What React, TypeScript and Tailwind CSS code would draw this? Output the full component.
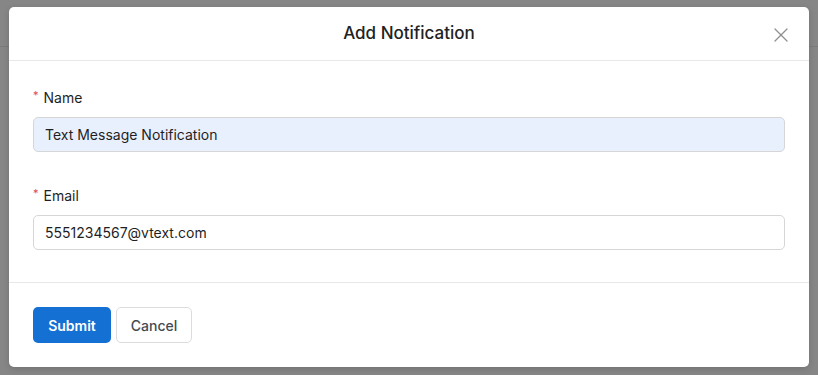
import { X } from "lucide-react";

const Field = ({
   label,
   value,
   autofilled,
}: {
   label: string;
   value: string;
   autofilled?: boolean;
}) => {
   return (
      <div className="flex flex-col">
         <label className="flex items-center h-5 text-[14px] text-[#1f1f1f]">
            <span className="text-[#e5484d] text-[11px] mr-[5px] -mt-[4px]">*</span>
            {label}
         </label>
         <input
            readOnly
            value={value}
            className={`mt-[10px] h-[35px] w-full rounded-[5px] border border-[#d6d6d6] px-[11px] text-[14px] text-[#1f1f1f] outline-none ${
               autofilled ? "bg-[#e8f0fe]" : "bg-white"
            }`}
         />
      </div>
   );
};

export default function App() {
   return (
      <div
         className="relative h-[375px] w-[818px] overflow-hidden bg-[#868686] px-[9px] pt-[7px]"
         style={{ fontFamily: "Inter, 'Noto Sans', sans-serif" }}
      >
         <div className="absolute left-0 right-0 top-[46px] h-px bg-[#7b7b7b]" />
         <div className="relative flex flex-col rounded-[5px] bg-white shadow-[0_2px_6px_rgba(0,0,0,0.15)]">
            <header className="relative flex h-[54px] items-center justify-center border-b border-[#e8e8e8]">
               <h2 className="text-[17px] font-medium text-[#222] pt-[1px]">Add Notification</h2>
               <button className="absolute right-[16px] top-[16px] text-[#8f8f8f]">
                  <X className="h-[24px] w-[24px]" strokeWidth={1.3} />
               </button>
            </header>
            <section className="flex flex-col gap-[33px] px-[24px] pt-[26px] pb-[32px] border-b border-[#e8e8e8]">
               <Field label="Name" value="Text Message Notification" autofilled />
               <Field label="Email" value="5551234567@vtext.com" />
            </section>
            <footer className="flex gap-[5px] px-[24px] pt-[24px] pb-[24px]">
               <button className="h-[36px] w-[78px] rounded-[5px] bg-[#1470d2] text-[14px] font-semibold text-white">
                  Submit
               </button>
               <button className="h-[36px] w-[76px] rounded-[5px] border border-[#dcdcdc] bg-white text-[14px] font-medium text-[#444a52]">
                  Cancel
               </button>
            </footer>
         </div>
      </div>
   );
}
